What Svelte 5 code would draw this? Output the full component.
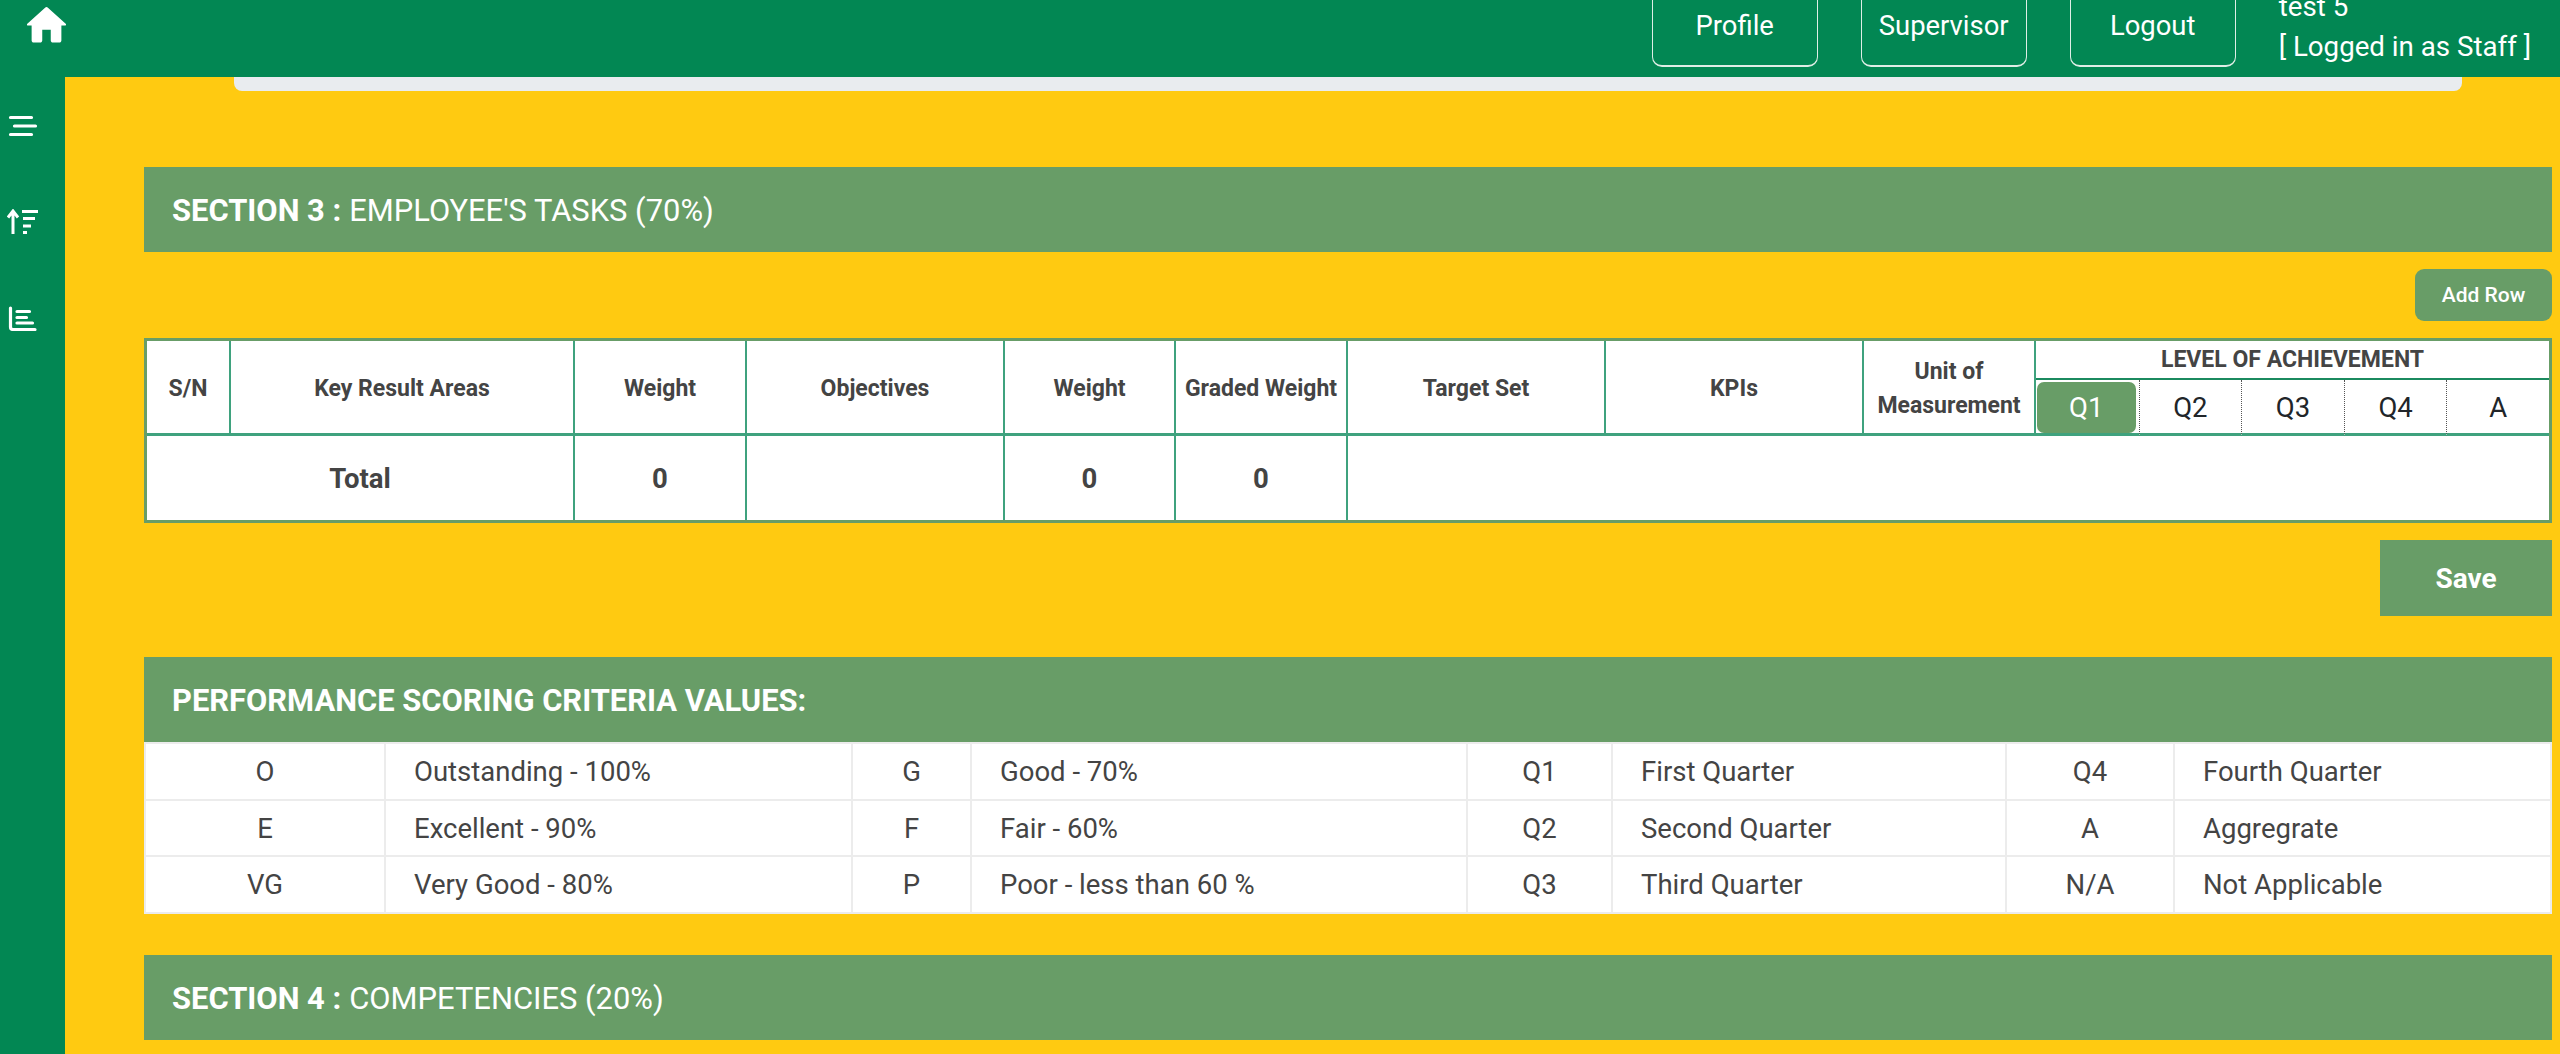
<script>
  const columns = [
    { label: 'S/N', cls: 'c-sn' },
    { label: 'Key Result Areas', cls: 'c-kra' },
    { label: 'Weight', cls: 'c-sm' },
    { label: 'Objectives', cls: 'c-lg' },
    { label: 'Weight', cls: 'c-wt' },
    { label: 'Graded Weight', cls: 'c-sm' },
    { label: 'Target Set', cls: 'c-lg' },
    { label: 'KPIs', cls: 'c-lg' }
  ]
  const quarters = ['Q1', 'Q2', 'Q3', 'Q4', 'A']
  const navItems = ['Profile', 'Supervisor', 'Logout']
  const criteria = [
    ['O', 'Outstanding - 100%', 'G', 'Good - 70%', 'Q1', 'First Quarter', 'Q4', 'Fourth Quarter'],
    ['E', 'Excellent - 90%', 'F', 'Fair - 60%', 'Q2', 'Second Quarter', 'A', 'Aggregrate'],
    ['VG', 'Very Good - 80%', 'P', 'Poor - less than 60 %', 'Q3', 'Third Quarter', 'N/A', 'Not Applicable']
  ]
</script>

<div class="page">
  <header class="topbar">
    <svg class="home" viewBox="0 0 24 24" fill="#fff">
      <path d="M10 19v-5h4v5c0 .55.45 1 1 1h3c.55 0 1-.45 1-1v-7h1.7c.46 0 .68-.57.33-.87L12.67 3.6c-.38-.34-.96-.34-1.34 0l-8.36 7.53c-.34.3-.13.87.33.87H5v7c0 .55.45 1 1 1h3c.55 0 1-.45 1-1z" />
    </svg>
    <nav class="nav">
      {#each navItems as item}
        <button class="nav_btn">{item}</button>
      {/each}
    </nav>
    <div class="user">
      <div>test 5</div>
      <div>[ Logged in as Staff ]</div>
    </div>
  </header>

  <div class="body">
    <aside class="sidebar">
      <svg class="side_icon" viewBox="0 0 32 26" fill="none" stroke="#fff" stroke-width="3.2" stroke-linecap="round">
        <path d="M3.5 4.5h21M7.5 13h21M3.5 21.5h21" />
      </svg>
      <svg class="side_icon" viewBox="0 0 32 26" fill="none" stroke="#fff" stroke-width="3">
        <path d="M6 25V3M1 8.5L6 2L11 8.5" />
        <path d="M15 2.5h16M16 9.5h12M16 17h8M16 23.5h4" />
      </svg>
      <svg class="side_icon" viewBox="0 0 32 26" fill="none" stroke="#fff" stroke-width="3.2" stroke-linecap="round" stroke-linejoin="round">
        <path d="M3.5 3v19a2.5 2.5 0 0 0 2.5 2.5h22" />
        <path d="M10 6.5h12.5M10 12.5h9.5M10 18h15.5" />
      </svg>
    </aside>

    <main class="content">
      <div class="strip"></div>

      <div class="band band_first"><b>SECTION 3 :</b> EMPLOYEE'S TASKS (70%)</div>

      <div class="actions">
        <button class="add_btn">Add Row</button>
      </div>

      <div class="tasks_wrap">
        <table class="tasks">
          <colgroup>
            {#each columns as col}
              <col class={col.cls} />
            {/each}
            <col class="c-sm" />
            {#each quarters as q}
              <col />
            {/each}
          </colgroup>
          <thead>
            <tr class="head_top">
              {#each columns as col}
                <th rowspan="2">{col.label}</th>
              {/each}
              <th rowspan="2">Unit of<br />Measurement</th>
              <th colspan="5" class="level">LEVEL OF ACHIEVEMENT</th>
            </tr>
            <tr class="head_tabs">
              {#each quarters as q, i}
                <th class="tab" class:first={i === 0}>
                  <span class="tab_label" class:active={i === 0}>{q}</span>
                </th>
              {/each}
            </tr>
          </thead>
          <tbody>
            <tr class="total_row">
              <td colspan="2">Total</td>
              <td>0</td>
              <td></td>
              <td>0</td>
              <td>0</td>
              <td colspan="8"></td>
            </tr>
          </tbody>
        </table>
      </div>

      <div class="actions">
        <button class="save_btn">Save</button>
      </div>

      <div class="band band_gap"><b>PERFORMANCE SCORING CRITERIA VALUES:</b></div>

      <table class="criteria">
        <colgroup>
          <col class="k1" /><col class="v1" />
          <col class="k2" /><col class="v2" />
          <col class="k3" /><col class="v3" />
          <col class="k4" /><col />
        </colgroup>
        <tbody>
          {#each criteria as row}
            <tr>
              {#each row as cell, i}
                <td class:key={i % 2 === 0}>{cell}</td>
              {/each}
            </tr>
          {/each}
        </tbody>
      </table>

      <div class="band band_gap"><b>SECTION 4 :</b> COMPETENCIES (20%)</div>
    </main>
  </div>
</div>

<style>
  :global(body) {
    margin: 0;
    background: #ffca11;
    overflow: hidden;
  }

  .page {
    height: 1054px;
    overflow: hidden;
    font-family: Roboto, 'Liberation Sans', sans-serif;
    color: #444;
  }

  .topbar {
    display: flex;
    align-items: flex-end;
    height: 77px;
    background: #028753;
    overflow: hidden;
    padding-left: 21px;
    padding-right: 29px;
    box-sizing: border-box;
    color: #fff;
  }

  .home {
    width: 51px;
    height: 51px;
    align-self: flex-start;
  }

  .nav {
    display: flex;
    gap: 43px;
    margin-left: auto;
    margin-bottom: 10px;
  }

  .nav_btn {
    width: 166px;
    height: 84px;
    padding: 2px 0 0;
    background: transparent;
    border: 1px solid #dfeee6;
    border-bottom-width: 2px;
    border-radius: 10px;
    color: #fff;
    font-family: inherit;
    font-size: 27.4px;
  }

  .user {
    margin-left: 43px;
    margin-bottom: 10px;
    font-size: 27.7px;
    line-height: 40px;
    white-space: nowrap;
  }

  .body {
    display: flex;
    height: 977px;
  }

  .sidebar {
    width: 65px;
    flex-shrink: 0;
    background: #028753;
    display: flex;
    flex-direction: column;
    align-items: flex-start;
    gap: 70px;
    padding: 36px 0 0 7px;
    box-sizing: border-box;
  }

  .side_icon {
    width: 32px;
    height: 26px;
  }

  .content {
    flex: 1;
    min-width: 0;
    padding: 0 8px 0 79px;
  }

  .strip {
    height: 14px;
    margin: 0 90px;
    background: #e9ecef;
    border-radius: 0 0 8px 8px;
  }

  .band {
    height: 85px;
    box-sizing: border-box;
    display: flex;
    align-items: center;
    gap: 8px;
    padding: 2px 0 0 28px;
    background: #689d67;
    color: #fff;
    font-size: 30.9px;
  }

  .band b {
    font-weight: 700;
  }

  .band_first {
    margin-top: 76px;
  }

  .band_gap {
    margin-top: 41px;
  }

  .actions {
    display: flex;
    justify-content: flex-end;
    margin-top: 17px;
  }

  .add_btn {
    width: 137px;
    height: 52px;
    padding: 0;
    border: none;
    border-radius: 9px;
    background: #689d67;
    color: #fff;
    font-family: inherit;
    font-size: 21px;
    font-weight: 500;
  }

  .save_btn {
    width: 172px;
    height: 76px;
    padding: 0;
    border: none;
    background: #689d67;
    color: #fff;
    font-family: inherit;
    font-size: 28px;
    font-weight: 700;
  }

  .tasks_wrap {
    margin-top: 17px;
    border: 3px solid #689d67;
    background: #fff;
  }

  .tasks {
    width: 100%;
    table-layout: fixed;
    border-collapse: separate;
    border-spacing: 0;
  }

  .c-sn { width: 84px; }
  .c-kra { width: 344px; }
  .c-sm { width: 172px; }
  .c-wt { width: 171px; }
  .c-lg { width: 258px; }

  .tasks th,
  .tasks td {
    padding: 0;
    text-align: center;
    vertical-align: middle;
    box-sizing: border-box;
  }

  .tasks thead th {
    padding-top: 3px;
    font-size: 23px;
    font-weight: 700;
    line-height: 34px;
    border-right: 2px solid #3fa27e;
    border-bottom: 3px solid #3fa27e;
  }

  .head_top {
    height: 39px;
  }

  .head_tabs {
    height: 56px;
  }

  .tasks thead th.level {
    padding-top: 0;
    border-right: none;
    border-bottom: 2px solid #1b8a5f;
  }

  .tasks thead th.tab {
    border-right: none;
    border-left: 1px dotted #555;
    padding: 2px 3px 0;
  }

  .tasks thead th.tab.first {
    border-left: none;
    padding: 2px 3px 0 1px;
  }

  .tab_label {
    display: block;
    height: 51px;
    border-radius: 7px;
    color: #212529;
    font-size: 27.5px;
    font-weight: 400;
    line-height: 51px;
  }

  .tab_label.active {
    background: #689d67;
    color: #fff;
  }

  .total_row {
    height: 84px;
  }

  .total_row td {
    font-size: 27.5px;
    font-weight: 700;
    border-right: 2px solid #3fa27e;
  }

  .total_row td:last-child {
    border-right: none;
  }

  .criteria {
    width: 100%;
    table-layout: fixed;
    border-collapse: collapse;
    background: #fff;
  }

  .k1 { width: 240px; }
  .v1 { width: 467px; }
  .k2 { width: 119px; }
  .v2 { width: 496px; }
  .k3 { width: 145px; }
  .v3 { width: 394px; }
  .k4 { width: 168px; }

  .criteria td {
    height: 56.6px;
    padding: 2px 0 0 28px;
    box-sizing: border-box;
    border: 2px solid #ececec;
    font-size: 27.5px;
    line-height: 30px;
  }

  .criteria td.key {
    padding: 2px 0 0;
    text-align: center;
  }
</style>
